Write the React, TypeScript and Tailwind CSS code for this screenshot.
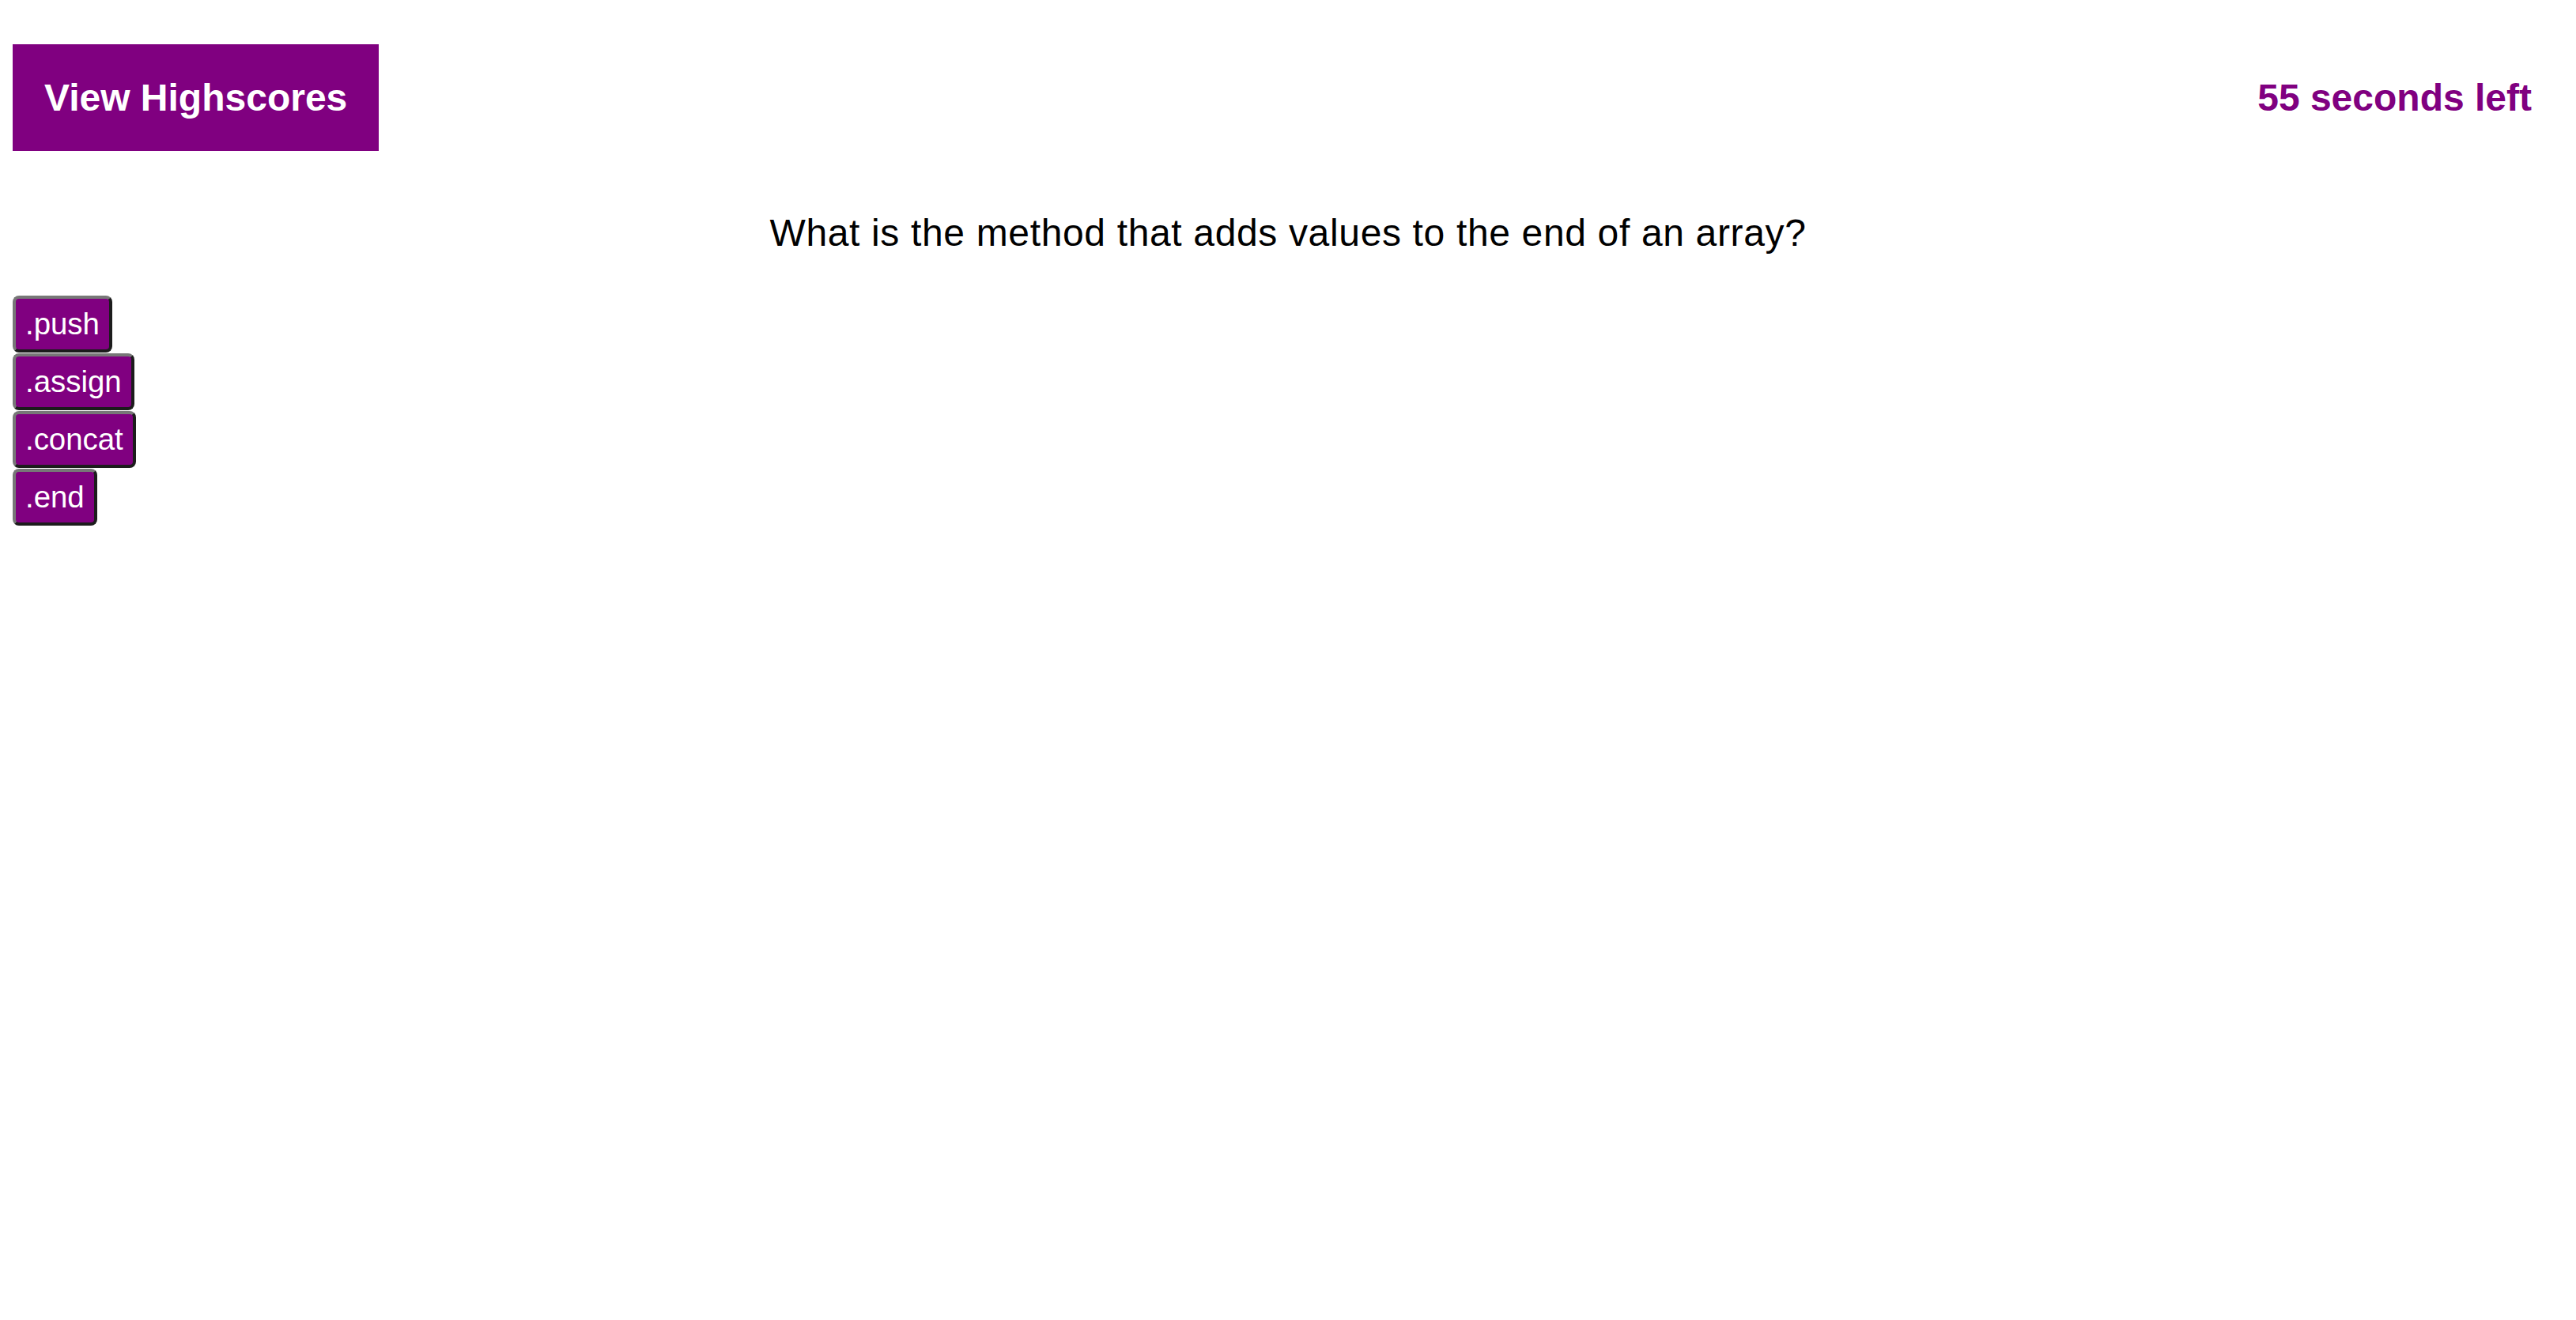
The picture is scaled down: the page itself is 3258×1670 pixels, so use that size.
import React from "react";

const answers = [".push", ".assign", ".concat", ".end"];

export default function App() {
  return (
    <div
      className="min-h-screen bg-white px-4 pt-[56px] text-black"
      style={{ fontFamily: '"Liberation Sans", Arial, sans-serif' }}
    >
      <header className="flex items-center justify-between">
        <button className="bg-[#800080] px-[40px] py-[40px] text-[48px] font-bold leading-[55px] text-white">
          View Highscores
        </button>
        <div className="pr-[40px] text-[48px] font-bold leading-[55px] text-[#800080]">
          55 seconds left
        </div>
      </header>
      <h2 className="mt-[76px] mb-[52px] text-center text-[48px] font-normal leading-[55px] tracking-[0.65px]">
        What is the method that adds values to the end of an array?
      </h2>
      <div className="flex flex-col items-start gap-px">
        {answers.map((a) => (
          <button
            key={a}
            className="rounded-[8px] border-[4px] border-t-[#777777] border-l-[#777777] border-r-[#1c1c1c] border-b-[#1c1c1c] bg-[#800080] px-3 py-[10px] text-[38.4px] leading-[44px] text-white"
          >
            {a}
          </button>
        ))}
      </div>
    </div>
  );
}
